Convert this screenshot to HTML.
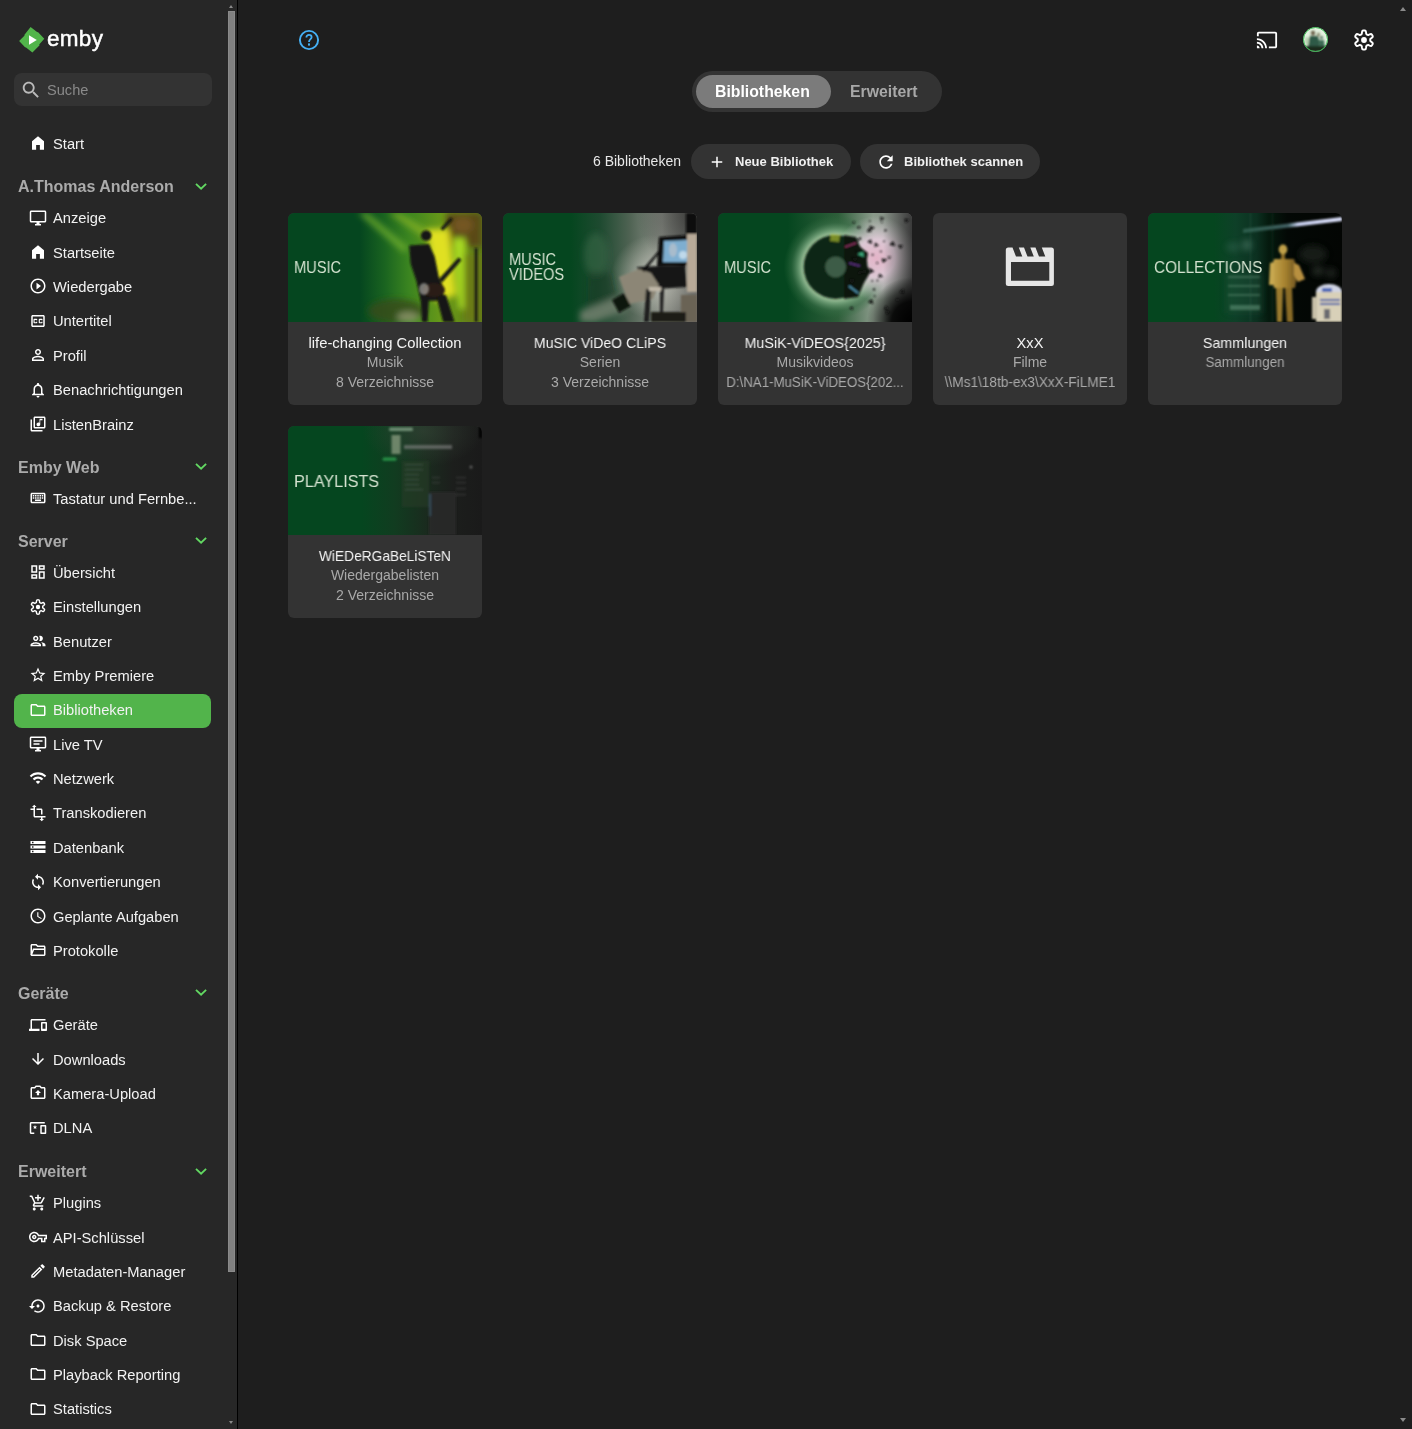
<!DOCTYPE html>
<html><head><meta charset="utf-8"><title>Emby</title><style>
*{box-sizing:border-box;margin:0;padding:0}
.it,.hdr,.t,.lbl,.btn span,.tx{will-change:transform}
html,body{width:1412px;height:1429px;overflow:hidden;background:#1e1e1e;font-family:"Liberation Sans",sans-serif;color:#fff}
.ic{position:absolute;display:block}
#side{position:absolute;left:0;top:0;width:237px;height:1429px;background:#272727;overflow:hidden}
#sbline{position:absolute;left:237px;top:0;width:1px;height:1429px;background:#000}
.hdr{position:absolute;left:18px;font-size:16px;font-weight:700;color:#ababab;line-height:1;white-space:nowrap}
.it{position:absolute;left:52.5px;font-size:14.7px;color:#f2f2f2;line-height:1;white-space:nowrap}
.act{position:absolute;left:14px;width:197px;height:34px;border-radius:8px;background:#52b44b}
.chev{position:absolute;left:193.5px;width:14px;height:12px}
#search{position:absolute;left:14px;top:73px;width:198px;height:33px;border-radius:8px;background:#333}
#search span{will-change:transform;position:absolute;left:33px;top:10px;font-size:14.6px;color:#8a8a8a;line-height:1}
#thumb{position:absolute;left:228px;top:11px;width:7px;height:1261px;background:#808080;border:1px solid #8a8a8a}
.arr{position:absolute;left:228.6px;width:0;height:0;border-left:2.8px solid transparent;border-right:2.8px solid transparent}
.card{position:absolute;width:194px;height:192px;border-radius:6px;background:#333;overflow:hidden}
.card .img{position:absolute;left:0;top:0;width:194px;height:109px;overflow:hidden}
.card .t{position:absolute;left:0;width:194px;text-align:center;white-space:nowrap;line-height:1}
.card .t1{font-size:14.6px;color:#f4f4f4}
.card .t2{font-size:14px;color:#a9a9a9}
.lbl{position:absolute;left:7px;font-size:16.5px;color:#d5e3d0;line-height:1;white-space:nowrap;transform-origin:0 0}
.btn{position:absolute;top:144px;height:35px;border-radius:18px;background:#333}
.btn span{position:absolute;font-size:13px;font-weight:700;color:#f0f0f0;line-height:1;white-space:nowrap}
</style></head>
<body>
<div id="side">
  <svg style="position:absolute;left:0;top:0;width:60px;height:60px" viewBox="0 0 60 60"><polygon points="30.6,27.1 37.4,32.2 37.9,32.0 44.3,38.7 39.2,44.6 39.6,45.3 32.4,52.6 25.7,47.3 25.3,47.6 19.1,41 24.6,35.4 24.3,34.9" fill="#52b54b"/><polygon points="29,35.3 36.8,40 29,44.8" fill="#fff"/></svg>
  <div class="tx" style="position:absolute;left:46.5px;top:27.5px;font-size:22.5px;font-weight:400;color:#fff;line-height:1;letter-spacing:0.3px;-webkit-text-stroke:0.45px #fff">emby</div>
  <div id="search"><svg class="ic" style="left:6px;top:6px;width:22px;height:22px;color:#bbb" viewBox="0 0 24 24" fill="currentColor"><path d="M15.5 14h-.79l-.28-.27C15.41 12.59 16 11.11 16 9.5 16 5.910 13.09 3 9.5 3S3 5.91 3 9.5 5.91 16 9.5 16c1.61 0 3.09-.59 4.23-1.57l.27.28v.79l5 4.99L20.49 19l-4.99-5zm-6 0C7.01 14 5 11.99 5 9.5S7.01 5 9.5 5 14 7.01 14 9.5 11.99 14 9.5 14z"/></svg><span>Suche</span></div>
  <div class="it" style="top:136.86px">Start</div>
<svg class="ic" style="left:28.6px;top:134.2px;width:18px;height:18px;color:#fff" viewBox="0 0 24 24" fill="currentColor"><path d="M4 21V9.5L12 3l8 6.5V21h-5.5v-6.5h-5V21z"/></svg>
<div class="hdr" style="top:179.46px">A.Thomas Anderson</div>
<svg class="chev" style="top:179.70px" viewBox="0 0 14 12"><polyline points="2,3.9 7.05,8.6 12.1,3.9" fill="none" stroke="#62d862" stroke-width="1.9"/></svg>
<div class="it" style="top:211.36px">Anzeige</div>
<svg class="ic" style="left:28.6px;top:208.7px;width:18px;height:18px;color:#fff" viewBox="0 0 24 24" fill="currentColor"><path d="M21 2H3c-1.1 0-2 .9-2 2v12c0 1.1.9 2 2 2h7v2H8v2h8v-2h-2v-2h7c1.1 0 2-.9 2-2V4c0-1.1-.9-2-2-2zm0 14H3V4h18v12z"/></svg>
<div class="it" style="top:245.72px">Startseite</div>
<svg class="ic" style="left:28.6px;top:243.06px;width:18px;height:18px;color:#fff" viewBox="0 0 24 24" fill="currentColor"><path d="M4 21V9.5L12 3l8 6.5V21h-5.5v-6.5h-5V21z"/></svg>
<div class="it" style="top:280.08px">Wiedergabe</div>
<svg class="ic" style="left:28.6px;top:277.42px;width:18px;height:18px;color:#fff" viewBox="0 0 24 24" fill="currentColor"><path d="M10 16.5l6-4.5-6-4.5v9zM12 2C6.48 2 2 6.48 2 12s4.48 10 10 10 10-4.48 10-10S17.52 2 12 2zm0 18c-4.41 0-8-3.59-8-8s3.59-8 8-8 8 3.59 8 8-3.59 8-8 8z"/></svg>
<div class="it" style="top:314.44px">Untertitel</div>
<svg class="ic" style="left:28.6px;top:311.78px;width:18px;height:18px;color:#fff" viewBox="0 0 24 24" fill="currentColor"><path d="M19 4H5c-1.11 0-2 .9-2 2v12c0 1.1.89 2 2 2h14c1.1 0 2-.9 2-2V6c0-1.1-.9-2-2-2zm0 14H5V6h14v12zM7 15h3c.55 0 1-.45 1-1v-1H9.5v.5h-2v-3h2v.5H11v-1c0-.55-.45-1-1-1H7c-.55 0-1 .45-1 1v4c0 .55.45 1 1 1zm7 0h3c.55 0 1-.45 1-1v-1h-1.5v.5h-2v-3h2v.5H18v-1c0-.55-.45-1-1-1h-3c-.55 0-1 .45-1 1v4c0 .55.45 1 1 1z"/></svg>
<div class="it" style="top:348.80px">Profil</div>
<svg class="ic" style="left:28.6px;top:346.14px;width:18px;height:18px;color:#fff" viewBox="0 0 24 24" fill="currentColor"><path d="M12 5.9c1.16 0 2.1.94 2.1 2.1s-.94 2.1-2.1 2.1S9.9 9.16 9.9 8s.94-2.1 2.1-2.1m0 9c2.97 0 6.1 1.46 6.1 2.1v1.1H5.9V17c0-.64 3.13-2.1 6.1-2.1M12 4C9.79 4 8 5.79 8 8s1.79 4 4 4 4-1.79 4-4-1.79-4-4-4zm0 9c-2.67 0-8 1.34-8 4v3h16v-3c0-2.66-5.33-4-8-4z"/></svg>
<div class="it" style="top:383.16px">Benachrichtigungen</div>
<svg class="ic" style="left:28.6px;top:380.5px;width:18px;height:18px;color:#fff" viewBox="0 0 24 24" fill="currentColor"><path d="M12 22c1.1 0 2-.9 2-2h-4c0 1.1.89 2 2 2zm6-6v-5c0-3.07-1.64-5.64-4.5-6.32V4c0-.83-.67-1.5-1.5-1.5s-1.5.67-1.5 1.5v.68C7.63 5.36 6 7.92 6 11v5l-2 2v1h16v-1l-2-2zm-2 1H8v-6c0-2.48 1.51-4.5 4-4.5s4 2.02 4 4.5v6z"/></svg>
<div class="it" style="top:417.52px">ListenBrainz</div>
<svg class="ic" style="left:28.6px;top:414.86px;width:18px;height:18px;color:#fff" viewBox="0 0 24 24" fill="currentColor"><path d="M20 2H8c-1.1 0-2 .9-2 2v12c0 1.1.9 2 2 2h12c1.1 0 2-.9 2-2V4c0-1.1-.9-2-2-2zm0 14H8V4h12v12zm-7.5-1c1.38 0 2.5-1.12 2.5-2.5V7h3V5h-4v5.51c-.42-.32-.93-.51-1.5-.51-1.38 0-2.5 1.12-2.5 2.5s1.12 2.5 2.5 2.5zM4 6H2v14c0 1.1.9 2 2 2h14v-2H4V6z"/></svg>
<div class="hdr" style="top:459.96px">Emby Web</div>
<svg class="chev" style="top:460.20px" viewBox="0 0 14 12"><polyline points="2,3.9 7.05,8.6 12.1,3.9" fill="none" stroke="#62d862" stroke-width="1.9"/></svg>
<div class="it" style="top:492.06px">Tastatur und Fernbe...</div>
<svg class="ic" style="left:28.6px;top:489.4px;width:18px;height:18px;color:#fff" viewBox="0 0 24 24" fill="currentColor"><path d="M20 7v10H4V7h16m0-2H4c-1.1 0-1.99.9-1.99 2L2 17c0 1.1.9 2 2 2h16c1.1 0 2-.9 2-2V7c0-1.1-.9-2-2-2zm-9 3h2v2h-2zm0 3h2v2h-2zM8 8h2v2H8zm0 3h2v2H8zm-3 0h2v2H5zm0-3h2v2H5zm3 6h8v2H8zm6-3h2v2h-2zm0-3h2v2h-2zm3 3h2v2h-2zm0-3h2v2h-2z"/></svg>
<div class="hdr" style="top:533.86px">Server</div>
<svg class="chev" style="top:534.10px" viewBox="0 0 14 12"><polyline points="2,3.9 7.05,8.6 12.1,3.9" fill="none" stroke="#62d862" stroke-width="1.9"/></svg>
<div class="it" style="top:565.96px">Übersicht</div>
<svg class="ic" style="left:28.6px;top:563.3px;width:18px;height:18px;color:#fff" viewBox="0 0 24 24" fill="currentColor"><path d="M19 5v2h-4V5h4M9 5v6H5V5h4m10 8v6h-4v-6h4M9 17v2H5v-2h4M21 3h-8v6h8V3zM11 3H3v10h8V3zm10 8h-8v10h8V11zm-10 4H3v6h8v-6z"/></svg>
<div class="it" style="top:600.32px">Einstellungen</div>
<svg class="ic" style="left:28.6px;top:597.66px;width:18px;height:18px;color:#fff" viewBox="0 0 24 24" fill="currentColor"><polygon fill="none" stroke="currentColor" stroke-width="1.9" stroke-linejoin="round" points="12.00,2.42 12.83,2.48 13.62,2.80 14.04,4.37 14.21,5.93 14.64,6.34 15.11,6.61 15.58,6.89 16.15,7.05 17.59,6.41 19.16,6.00 19.83,6.52 20.29,7.21 20.66,7.96 20.78,8.80 19.63,9.96 18.36,10.88 18.22,11.46 18.22,12.00 18.22,12.54 18.36,13.12 19.63,14.04 20.78,15.20 20.66,16.04 20.29,16.79 19.83,17.48 19.16,18.00 17.59,17.59 16.15,16.95 15.58,17.11 15.11,17.39 14.64,17.66 14.21,18.07 14.04,19.63 13.62,21.20 12.83,21.52 12.00,21.58 11.17,21.52 10.38,21.20 9.96,19.63 9.79,18.07 9.36,17.66 8.89,17.39 8.42,17.11 7.85,16.95 6.41,17.59 4.84,18.00 4.17,17.48 3.71,16.79 3.34,16.04 3.22,15.20 4.37,14.04 5.64,13.12 5.78,12.54 5.78,12.00 5.78,11.46 5.64,10.88 4.37,9.96 3.22,8.80 3.34,7.96 3.71,7.21 4.17,6.52 4.84,6.00 6.41,6.41 7.85,7.05 8.42,6.89 8.89,6.61 9.36,6.34 9.79,5.93 9.96,4.37 10.38,2.80 11.17,2.48 12.00,2.42"/><circle cx="12" cy="12" r="2.9"/></svg>
<div class="it" style="top:634.68px">Benutzer</div>
<svg class="ic" style="left:28.6px;top:632.02px;width:18px;height:18px;color:#fff" viewBox="0 0 24 24" fill="currentColor"><path d="M9 13.75c-2.34 0-7 1.17-7 3.5V19h14v-1.75c0-2.33-4.66-3.5-7-3.5zM4.34 17c.84-.58 2.870-1.25 4.66-1.25s3.82.67 4.66 1.25H4.34zM9 12c1.93 0 3.5-1.57 3.5-3.5S10.93 5 9 5 5.5 6.57 5.5 8.5 7.07 12 9 12zm0-5c.83 0 1.5.67 1.5 1.5S9.83 10 9 10s-1.5-.67-1.5-1.5S8.17 7 9 7zm7.04 6.81c1.16.84 1.96 1.96 1.96 3.44V19h4v-1.75c0-2.02-3.5-3.17-5.96-3.44zM15 12c1.93 0 3.5-1.57 3.5-3.5S16.93 5 15 5c-.54 0-1.04.13-1.5.35.63.89 1 1.98 1 3.15s-.37 2.26-1 3.15c.46.22.96.35 1.5.35z"/></svg>
<div class="it" style="top:669.04px">Emby Premiere</div>
<svg class="ic" style="left:28.6px;top:666.38px;width:18px;height:18px;color:#fff" viewBox="0 0 24 24" fill="currentColor"><path d="M22 9.24l-7.19-.62L12 2 9.19 8.63 2 9.24l5.46 4.73L5.82 21 12 17.27 18.18 21l-1.63-7.03L22 9.24zM12 15.4l-3.76 2.27 1-4.28-3.32-2.88 4.38-.38L12 6.1l1.71 4.04 4.38.38-3.32 2.88 1 4.28L12 15.4z"/></svg>
<div class="act" style="top:693.84px"></div>
<div class="it" style="top:703.40px">Bibliotheken</div>
<svg class="ic" style="left:28.6px;top:700.74px;width:18px;height:18px;color:#fff" viewBox="0 0 24 24" fill="currentColor"><path d="M9.17 6l2 2H20v10H4V6h5.17M10 4H4c-1.1 0-1.99.9-1.99 2L2 18c0 1.1.9 2 2 2h16c1.1 0 2-.9 2-2V8c0-1.1-.9-2-2-2h-8l-2-2z"/></svg>
<div class="it" style="top:737.76px">Live TV</div>
<svg class="ic" style="left:28.6px;top:735.1px;width:18px;height:18px;color:#fff" viewBox="0 0 24 24" fill="currentColor"><path d="M21 2H3c-1.1 0-2 .9-2 2v12c0 1.1.9 2 2 2h7v2H8v2h8v-2h-2v-2h7c1.1 0 2-.9 2-2V4c0-1.1-.9-2-2-2zm0 14H3V4h18v12zM6 7h12v2H6zm0 4h8v2H6z"/></svg>
<div class="it" style="top:772.12px">Netzwerk</div>
<svg class="ic" style="left:28.6px;top:769.46px;width:18px;height:18px;color:#fff" viewBox="0 0 24 24" fill="currentColor"><path d="M1 9l2 2c4.97-4.97 13.03-4.97 18 0l2-2C16.93 2.93 7.08 2.93 1 9zm8 8l3 3 3-3c-1.65-1.66-4.34-1.66-6 0zm-4-4l2 2c2.76-2.76 7.24-2.76 10 0l2-2C15.14 9.14 8.87 9.14 5 13z"/></svg>
<div class="it" style="top:806.48px">Transkodieren</div>
<svg class="ic" style="left:28.6px;top:803.82px;width:18px;height:18px;color:#fff" viewBox="0 0 24 24" fill="currentColor"><path d="M22 18v-2H8V4h2L7 1 4 4h2v2H2v2h4v8c0 1.1.9 2 2 2h8v2h-2l3 3 3-3h-2v-2h4zM10 8h6v6h2V8c0-1.1-.9-2-2-2h-6v2z"/></svg>
<div class="it" style="top:840.84px">Datenbank</div>
<svg class="ic" style="left:28.6px;top:838.18px;width:18px;height:18px;color:#fff" viewBox="0 0 24 24" fill="currentColor"><path d="M2 20h20v-4H2v4zm2-3h2v2H4v-2zM2 4v4h20V4H2zm4 3H4V5h2v2zm-4 7h20v-4H2v4zm2-3h2v2H4v-2z"/></svg>
<div class="it" style="top:875.20px">Konvertierungen</div>
<svg class="ic" style="left:28.6px;top:872.54px;width:18px;height:18px;color:#fff" viewBox="0 0 24 24" fill="currentColor"><path d="M12 4V1L8 5l4 4V6c3.31 0 6 2.69 6 6 0 1.01-.25 1.97-.7 2.8l1.46 1.46C19.54 15.03 20 13.57 20 12c0-4.42-3.58-8-8-8zm0 14c-3.31 0-6-2.69-6-6 0-1.01.25-1.97.7-2.8L5.24 7.74C4.46 8.97 4 10.430 4 12c0 4.42 3.58 8 8 8v3l4-4-4-4v3z"/></svg>
<div class="it" style="top:909.56px">Geplante Aufgaben</div>
<svg class="ic" style="left:28.6px;top:906.9px;width:18px;height:18px;color:#fff" viewBox="0 0 24 24" fill="currentColor"><path d="M11.99 2C6.47 2 2 6.48 2 12s4.47 10 9.99 10C17.52 22 22 17.52 22 12S17.52 2 11.99 2zM12 20c-4.42 0-8-3.58-8-8s3.58-8 8-8 8 3.58 8 8-3.58 8-8 8zm.5-13H11v6l5.25 3.15.75-1.23-4.5-2.67z"/></svg>
<div class="it" style="top:943.92px">Protokolle</div>
<svg class="ic" style="left:28.6px;top:941.26px;width:18px;height:18px;color:#fff" viewBox="0 0 24 24" fill="currentColor"><path d="M20 6h-8l-2-2H4c-1.1 0-1.99.9-1.99 2L2 18c0 1.1.9 2 2 2h16c1.1 0 2-.9 2-2V8c0-1.1-.9-2-2-2zm0 12H4V6h5.17l2 2H20v10z"/><path d="M3 19L6 11H21" fill="none" stroke="currentColor" stroke-width="2"/></svg>
<div class="hdr" style="top:985.86px">Geräte</div>
<svg class="chev" style="top:986.10px" viewBox="0 0 14 12"><polyline points="2,3.9 7.05,8.6 12.1,3.9" fill="none" stroke="#62d862" stroke-width="1.9"/></svg>
<div class="it" style="top:1018.16px">Geräte</div>
<svg class="ic" style="left:28.6px;top:1015.5px;width:18px;height:18px;color:#fff" viewBox="0 0 24 24" fill="currentColor"><path d="M4 6h18V4H4c-1.1 0-2 .9-2 2v11H0v3h14v-3H4V6zm19 2h-6c-.55 0-1 .45-1 1v10c0 .55.45 1 1 1h6c.55 0 1-.45 1-1V9c0-.55-.45-1-1-1zm-1 9h-4v-7h4v7z"/></svg>
<div class="it" style="top:1052.52px">Downloads</div>
<svg class="ic" style="left:28.6px;top:1049.86px;width:18px;height:18px;color:#fff" viewBox="0 0 24 24" fill="currentColor"><path d="M20 12l-1.41-1.41L13 16.17V4h-2v12.17l-5.58-5.59L4 12l8 8 8-8z"/></svg>
<div class="it" style="top:1086.88px">Kamera-Upload</div>
<svg class="ic" style="left:28.6px;top:1084.22px;width:18px;height:18px;color:#fff" viewBox="0 0 24 24" fill="currentColor"><path d="M20 4h-3.17L15 2H9L7.17 4H4c-1.1 0-2 .9-2 2v12c0 1.1.9 2 2 2h16c1.1 0 2-.9 2-2V6c0-1.1-.9-2-2-2zm0 14H4V6h4.05l1.830-2h4.24l1.83 2H20v12zM12 8l-4 4h2.5v3h3v-3H16z"/></svg>
<div class="it" style="top:1121.24px">DLNA</div>
<svg class="ic" style="left:28.6px;top:1118.58px;width:18px;height:18px;color:#fff" viewBox="0 0 24 24" fill="currentColor"><path d="M3 6h18V4H3c-1.1 0-2 .9-2 2v12c0 1.1.9 2 2 2h4v-2H3V6zM22 8h-6c-.5 0-1 .5-1 1v10c0 .5.5 1 1 1h6c.5 0 1-.5 1-1V9c0-.5-.5-1-1-1zm-1 10h-4v-8h4v8zM8 8l.8 1.9 2 .2-1.5 1.3.5 2-1.8-1.1-1.8 1.1.5-2L5.2 10.1l2-.2z"/></svg>
<div class="hdr" style="top:1164.26px">Erweitert</div>
<svg class="chev" style="top:1164.50px" viewBox="0 0 14 12"><polyline points="2,3.9 7.05,8.6 12.1,3.9" fill="none" stroke="#62d862" stroke-width="1.9"/></svg>
<div class="it" style="top:1196.16px">Plugins</div>
<svg class="ic" style="left:28.6px;top:1193.5px;width:18px;height:18px;color:#fff" viewBox="0 0 24 24" fill="currentColor"><path d="M11 9h2V6h3V4h-3V1h-2v3H8v2h3v3zm-4 9c-1.1 0-1.99.9-1.99 2S5.9 22 7 22s2-.9 2-2-.9-2-2-2zm10 0c-1.1 0-1.99.9-1.99 2s.89 2 1.99 2 2-.9 2-2-.9-2-2-2zm-9.83-3.25l.03-.12.9-1.63h7.45c.75 0 1.41-.41 1.750-1.03l3.86-7.01L19.42 4h-.01l-1.1 2-2.76 5H8.53l-.13-.27L6.16 6l-.95-2-.94-2H1v2h2l3.6 7.59-1.35 2.45c-.16.28-.25.61-.25.96 0 1.1.9 2 2 2h12v-2H7.42c-.13 0-.25-.11-.25-.25z"/></svg>
<div class="it" style="top:1230.52px">API-Schlüssel</div>
<svg class="ic" style="left:28.6px;top:1227.86px;width:18px;height:18px;color:#fff" viewBox="0 0 24 24" fill="currentColor"><path d="M22 19h-6v-4h-2.68c-1.14 2.42-3.6 4-6.32 4-3.86 0-7-3.14-7-7s3.14-7 7-7c2.72 0 5.17 1.58 6.32 4H24v6h-2v4zm-4-2h2v-4h2v-2H11.94l-.23-.67C11.01 8.34 9.11 7 7 7c-2.76 0-5 2.24-5 5s2.24 5 5 5c2.11 0 4.01-1.34 4.71-3.33l.23-.67H18v4zM7 15c-1.65 0-3-1.35-3-3s1.35-3 3-3 3 1.35 3 3-1.35 3-3 3zm0-4c-.55 0-1 .45-1 1s.45 1 1 1 1-.45 1-1-.45-1-1-1z"/></svg>
<div class="it" style="top:1264.88px">Metadaten-Manager</div>
<svg class="ic" style="left:28.6px;top:1262.22px;width:18px;height:18px;color:#fff" viewBox="0 0 24 24" fill="currentColor"><path d="M3 17.25V21h3.75L17.81 9.94l-3.75-3.75L3 17.25zM5.92 19H5v-.92l9.06-9.06.92.92L5.92 19zM20.71 5.63l-2.34-2.34c-.2-.2-.45-.29-.71-.29s-.51.1-.7.29l-1.83 1.83 3.75 3.75 1.83-1.83c.39-.39.39-1.02 0-1.41z"/></svg>
<div class="it" style="top:1299.24px">Backup &amp; Restore</div>
<svg class="ic" style="left:28.6px;top:1296.58px;width:18px;height:18px;color:#fff" viewBox="0 0 24 24" fill="currentColor"><path d="M14 12c0-1.1-.9-2-2-2s-2 .9-2 2 .9 2 2 2 2-.9 2-2zm-2-9c-4.97 0-9 4.03-9 9H0l4 4 4-4H5c0-3.87 3.13-7 7-7s7 3.13 7 7-3.13 7-7 7c-1.51 0-2.91-.49-4.06-1.3l-1.42 1.44C8.04 20.3 9.94 21 12 21c4.97 0 9-4.03 9-9s-4.03-9-9-9z"/></svg>
<div class="it" style="top:1333.60px">Disk Space</div>
<svg class="ic" style="left:28.6px;top:1330.94px;width:18px;height:18px;color:#fff" viewBox="0 0 24 24" fill="currentColor"><path d="M9.17 6l2 2H20v10H4V6h5.17M10 4H4c-1.1 0-1.99.9-1.99 2L2 18c0 1.1.9 2 2 2h16c1.1 0 2-.9 2-2V8c0-1.1-.9-2-2-2h-8l-2-2z"/></svg>
<div class="it" style="top:1367.96px">Playback Reporting</div>
<svg class="ic" style="left:28.6px;top:1365.3px;width:18px;height:18px;color:#fff" viewBox="0 0 24 24" fill="currentColor"><path d="M9.17 6l2 2H20v10H4V6h5.17M10 4H4c-1.1 0-1.99.9-1.99 2L2 18c0 1.1.9 2 2 2h16c1.1 0 2-.9 2-2V8c0-1.1-.9-2-2-2h-8l-2-2z"/></svg>
<div class="it" style="top:1402.32px">Statistics</div>
<svg class="ic" style="left:28.6px;top:1399.66px;width:18px;height:18px;color:#fff" viewBox="0 0 24 24" fill="currentColor"><path d="M9.17 6l2 2H20v10H4V6h5.17M10 4H4c-1.1 0-1.99.9-1.99 2L2 18c0 1.1.9 2 2 2h16c1.1 0 2-.9 2-2V8c0-1.1-.9-2-2-2h-8l-2-2z"/></svg>
  <div id="thumb"></div>
  <div class="arr" style="top:4.8px;border-bottom:3.3px solid #8a8a8a"></div>
  <div class="arr" style="top:1420.8px;border-top:3.3px solid #8a8a8a"></div>
</div>
<div id="sbline"></div>
<div id="main">
  <svg class="ic" style="left:297.3px;top:28px;width:24px;height:24px;color:#45b0f5" viewBox="0 0 24 24" fill="currentColor"><circle cx="12" cy="12" r="9.1" fill="none" stroke="currentColor" stroke-width="1.9"/><path d="M9.4 9.4C9.4 7.9 10.5 6.9 12 6.9S14.6 7.9 14.6 9.2C14.6 11 12 11.3 12 13.9" fill="none" stroke="currentColor" stroke-width="1.8"/><rect x="11" y="15.4" width="2" height="2.2"/></svg>
  <svg class="ic" style="left:1255.9px;top:29.05px;width:22px;height:22px;color:#fff" viewBox="0 0 24 24" fill="currentColor"><path d="M21 3H3c-1.1 0-2 .9-2 2v3h2V5h18v14h-7v2h7c1.1 0 2-.9 2-2V5c0-1.1-.9-2-2-2zM1 18v3h3c0-1.66-1.34-3-3-3zm0-4v2c2.76 0 5 2.24 5 5h2c0-3.87-3.13-7-7-7zm0-4v2c4.970 0 9 4.03 9 9h2c0-6.08-4.93-11-11-11z"/></svg>
  <svg style="position:absolute;left:1303px;top:27px;width:25px;height:25px" viewBox="0 0 25 25"><defs><clipPath id="avc"><circle cx="12.5" cy="12.5" r="12.2"/></clipPath><filter id="avb"><feGaussianBlur stdDeviation="1.1"/></filter></defs><g clip-path="url(#avc)"><rect width="25" height="25" fill="#e4f2e0"/><g filter="url(#avb)"><ellipse cx="10" cy="6" rx="2.2" ry="2.5" fill="#6a6048"/><ellipse cx="15.5" cy="7.5" rx="1.6" ry="2" fill="#8a8a70"/><polygon points="7,9 15,9 17,18 14,25 6,25 5,16" fill="#2f5a46"/><ellipse cx="18.5" cy="10.5" rx="1.4" ry="1.6" fill="#3a5a48"/><polygon points="16,13 21,13 22,22 17,24" fill="#3a6a52"/><rect x="0" y="19" width="25" height="6" fill="#1a2a1c"/><ellipse cx="4" cy="14" rx="2" ry="4" fill="#b8d0b0"/></g></g><circle cx="12.5" cy="12.5" r="12" fill="none" stroke="#3dbb55" stroke-width="1"/></svg>
  <svg class="ic" style="left:1352px;top:27.6px;width:24px;height:24px;color:#fff" viewBox="0 0 24 24" fill="currentColor"><polygon fill="none" stroke="currentColor" stroke-width="1.9" stroke-linejoin="round" points="12.00,2.42 12.83,2.48 13.62,2.80 14.04,4.37 14.21,5.93 14.64,6.34 15.11,6.61 15.58,6.89 16.15,7.05 17.59,6.41 19.16,6.00 19.83,6.52 20.29,7.21 20.66,7.96 20.78,8.80 19.63,9.96 18.36,10.88 18.22,11.46 18.22,12.00 18.22,12.54 18.36,13.12 19.63,14.04 20.78,15.20 20.66,16.04 20.29,16.79 19.83,17.48 19.16,18.00 17.59,17.59 16.15,16.95 15.58,17.11 15.11,17.39 14.64,17.66 14.21,18.07 14.04,19.63 13.62,21.20 12.83,21.52 12.00,21.58 11.17,21.52 10.38,21.20 9.96,19.63 9.79,18.07 9.36,17.66 8.89,17.39 8.42,17.11 7.85,16.95 6.41,17.59 4.84,18.00 4.17,17.48 3.71,16.79 3.34,16.04 3.22,15.20 4.37,14.04 5.64,13.12 5.78,12.54 5.78,12.00 5.78,11.46 5.64,10.88 4.37,9.96 3.22,8.80 3.34,7.96 3.71,7.21 4.17,6.52 4.84,6.00 6.41,6.41 7.85,7.05 8.42,6.89 8.89,6.61 9.36,6.34 9.79,5.93 9.96,4.37 10.38,2.80 11.17,2.48 12.00,2.42"/><circle cx="12" cy="12" r="2.9"/></svg>
  <div style="position:absolute;left:692px;top:71px;width:250px;height:41px;border-radius:21px;background:#333"></div>
  <div style="position:absolute;left:696px;top:75px;width:135px;height:33px;border-radius:17px;background:#7b7b7b"></div>
  <div class="tx" style="position:absolute;left:714.5px;top:83.63px;font-size:15.8px;font-weight:700;color:#fff;line-height:1">Bibliotheken</div>
  <div class="tx" style="position:absolute;left:849.5px;top:83.63px;font-size:15.8px;font-weight:700;color:#a8a8a8;line-height:1">Erweitert</div>
  <div class="tx" style="position:absolute;left:593px;top:154.15px;font-size:14px;color:#e8e8e8;line-height:1">6 Bibliotheken</div>
  <div class="btn" style="left:691px;width:160px"><span style="left:43.5px;top:11.00px">Neue Bibliothek</span></div>
  <div class="btn" style="left:860px;width:180px"><span style="left:43.5px;top:11.00px">Bibliothek scannen</span></div>
  <svg class="ic" style="left:708px;top:153px;width:18px;height:18px;color:#fff" viewBox="0 0 24 24" fill="currentColor"><path d="M19 13h-6v6h-2v-6H5v-2h6V5h2v6h6v2z"/></svg>
  <svg class="ic" style="left:876px;top:152px;width:20px;height:20px;color:#fff" viewBox="0 0 24 24" fill="currentColor"><path d="M17.65 6.35C16.2 4.9 14.21 4 12 4c-4.42 0-7.99 3.58-7.99 8s3.57 8 7.99 8c3.73 0 6.84-2.55 7.73-6h-2.08c-.82 2.33-3.04 4-5.650 4-3.31 0-6-2.69-6-6s2.69-6 6-6c1.66 0 3.14.69 4.22 1.78L13 11h7V4l-2.35 2.35z"/></svg>
  <div class="card" style="left:288px;top:213px"><div class="img"><svg width="194" height="109" viewBox="0 0 194 109" style="position:absolute;left:0;top:0;display:block"><defs><linearGradient id="c1g" x1="0" y1="0" x2="1" y2="0"><stop offset="0" stop-color="#05461f"/><stop offset="0.37" stop-color="#05461f"/><stop offset="0.5" stop-color="#1a6420"/><stop offset="0.62" stop-color="#3a8420"/><stop offset="0.8" stop-color="#6a9a18"/><stop offset="1" stop-color="#5a7a18"/></linearGradient><filter id="b1" x="-20%" y="-20%" width="140%" height="140%"><feGaussianBlur stdDeviation="1.2"/></filter><filter id="b2" x="-50%" y="-50%" width="200%" height="200%"><feGaussianBlur stdDeviation="3"/></filter><filter id="b4" x="-50%" y="-50%" width="200%" height="200%"><feGaussianBlur stdDeviation="6"/></filter></defs><rect width="194" height="109" fill="url(#c1g)"/>
<g filter="url(#b2)">
<polygon points="70,0 80,0 120,34 116,40" fill="#7ab830" opacity="0.7"/>
<polygon points="100,0 112,0 160,30 150,34" fill="#9ac028" opacity="0.6"/>
<rect x="158" y="0" width="36" height="34" fill="#5a4a18"/>
<polygon points="139,16 161,16 168,82 147,89" fill="#e0e020"/>
<polygon points="165,25 177,25 182,96 171,96" fill="#a8dc20"/>
<rect x="176" y="40" width="18" height="69" fill="#6a7a18"/>
<ellipse cx="108" cy="98" rx="28" ry="12" fill="#3a4a18" opacity="0.8"/>
<ellipse cx="120" cy="104" rx="11" ry="5" fill="#b0b090" opacity="0.6"/>
<ellipse cx="175" cy="12" rx="10" ry="8" fill="#7a5a28" opacity="0.8"/>
</g>
<g filter="url(#b1)" fill="#141612">
<circle cx="138.2" cy="22.5" r="5.3"/>
<polygon points="121.2,32.4 141,31 146.7,43.7 151,65 156.6,76.3 153.8,87.7 132.6,87.7 128.3,67.8 122.6,50.8"/>
<polygon points="132.6,84.8 141,84.8 139.6,109 134,109"/>
<polygon points="148,82 158,82 166.6,109 155.2,109"/>
<polygon points="151,66 170.5,44.5 173.5,47 154,69.5"/>
<ellipse cx="146" cy="77" rx="11" ry="7" fill="#2a1c12"/>
<polygon points="162.5,4.5 165,6.5 155,17.5 152.5,15.5"/>
<rect x="186.8" y="35" width="2.6" height="74"/>
</g>
<ellipse cx="136" cy="76" rx="5" ry="6" fill="#c8c8c0" opacity="0.55" filter="url(#b1)"/>
</svg><div class="lbl" style="top:46.3px;left:6px;transform:scaleX(0.885)">MUSIC</div></div><div class="t t1" style="top:122.64px;transform:scaleX(1.014)">life-changing Collection</div><div class="t t2" style="top:142.15px">Musik</div><div class="t t2" style="top:162.15px">8 Verzeichnisse</div></div>
<div class="card" style="left:503px;top:213px"><div class="img"><svg width="194" height="109" viewBox="0 0 194 109" style="position:absolute;left:0;top:0;display:block"><defs><linearGradient id="c2g" x1="0" y1="0" x2="1" y2="0"><stop offset="0" stop-color="#05461f"/><stop offset="0.35" stop-color="#05461f"/><stop offset="0.5" stop-color="#1e4a30"/><stop offset="0.65" stop-color="#4e6252"/><stop offset="0.82" stop-color="#8c9088"/><stop offset="1" stop-color="#6a6a66"/></linearGradient>
<radialGradient id="c2r" cx="150" cy="64" r="42" gradientUnits="userSpaceOnUse"><stop offset="0" stop-color="#d0d0c8" stop-opacity="0.85"/><stop offset="1" stop-color="#c8c8bc" stop-opacity="0"/></radialGradient>
<radialGradient id="c2d" cx="194" cy="0" r="60" gradientUnits="userSpaceOnUse"><stop offset="0" stop-color="#202020" stop-opacity="0.7"/><stop offset="1" stop-color="#202020" stop-opacity="0"/></radialGradient><filter id="b1" x="-20%" y="-20%" width="140%" height="140%"><feGaussianBlur stdDeviation="1.2"/></filter><filter id="b2" x="-50%" y="-50%" width="200%" height="200%"><feGaussianBlur stdDeviation="3"/></filter><filter id="b4" x="-50%" y="-50%" width="200%" height="200%"><feGaussianBlur stdDeviation="6"/></filter></defs><rect width="194" height="109" fill="url(#c2g)"/>
<rect width="194" height="109" fill="url(#c2r)"/>
<rect width="194" height="109" fill="url(#c2d)"/>
<g filter="url(#b2)">
<ellipse cx="93" cy="42" rx="12" ry="22" fill="#3a6a48" opacity="0.55"/>
<polygon points="86,58 108,60 116,100 84,104" fill="#1c3a26" opacity="0.5"/>
<polygon points="77,98 114,84 126,96 92,109 77,109" fill="#6e7e6c" opacity="0.9"/>
</g>
<g filter="url(#b1)">
<polygon points="134,54 182,52 184,74 140,77" fill="#161616"/>
<polygon points="156,24 186,22 186,52 154,53" fill="#0e0e0e"/>
<polygon points="161,28 184,27 184,49 160,49" fill="#7eaed0"/>
<ellipse cx="170" cy="37" rx="4" ry="7" fill="#a8bccc"/>
<ellipse cx="180" cy="42" rx="4" ry="4" fill="#d0e4f0" opacity="0.8"/>
<polygon points="116,64 136,56 148,60 156,72 150,86 126,91" fill="#8c8676"/>
<polygon points="109,87 121,80 128,93 116,100" fill="#0e140e"/>
<polygon points="139,57 157,36 158.5,37 141,59" fill="#101010"/>
<polygon points="143,76 148,76 146,109 141,109" fill="#1c1c1c"/>
<polygon points="157,76 161,76 160,100 157,100" fill="#202020"/>
<rect x="146" y="74" width="12" height="4" fill="#c0b8a8"/>
<rect x="183" y="0" width="11" height="22" fill="#0c0c0c"/>
<rect x="184" y="21" width="10" height="58" fill="#b8aa98"/>
<rect x="178" y="82" width="16" height="27" fill="#6a6454"/>
<rect x="148" y="99" width="35" height="10" fill="#1a1a16"/>
</g>
</svg><div class="lbl" style="top:38.9px;left:6px;line-height:15.2px;transform:scaleX(0.885)">MUSIC<br>VIDEOS</div></div><div class="t t1" style="top:122.64px;transform:scaleX(0.965)">MuSIC ViDeO CLiPS</div><div class="t t2" style="top:142.15px">Serien</div><div class="t t2" style="top:162.15px">3 Verzeichnisse</div></div>
<div class="card" style="left:718px;top:213px"><div class="img"><svg width="194" height="109" viewBox="0 0 194 109" style="position:absolute;left:0;top:0;display:block"><defs><linearGradient id="c3g" x1="0" y1="0" x2="1" y2="0"><stop offset="0" stop-color="#05461f"/><stop offset="0.36" stop-color="#05461f"/><stop offset="0.62" stop-color="#2e5e3a"/><stop offset="0.8" stop-color="#8a9a8a"/><stop offset="1" stop-color="#808080"/></linearGradient>
<radialGradient id="c3halo" cx="117.6" cy="53.9" r="52" gradientUnits="userSpaceOnUse"><stop offset="0" stop-color="#b8d8b0"/><stop offset="0.6" stop-color="#b0d0a8"/><stop offset="0.7" stop-color="#7aa880" stop-opacity="0.85"/><stop offset="0.85" stop-color="#3a7048" stop-opacity="0.5"/><stop offset="1" stop-color="#2a6a3a" stop-opacity="0"/></radialGradient>
<radialGradient id="c3pink" cx="158" cy="45" r="42" gradientUnits="userSpaceOnUse"><stop offset="0" stop-color="#e4b4c8"/><stop offset="0.45" stop-color="#dcc8d4"/><stop offset="1" stop-color="#d0d0d0" stop-opacity="0"/></radialGradient>
<linearGradient id="c3edge" x1="0" y1="0" x2="1" y2="0"><stop offset="0" stop-color="#000" stop-opacity="0"/><stop offset="1" stop-color="#000" stop-opacity="0.55"/></linearGradient>
<radialGradient id="c3dark" cx="194" cy="109" r="45" gradientUnits="userSpaceOnUse"><stop offset="0" stop-color="#000"/><stop offset="0.45" stop-color="#000" stop-opacity="0.9"/><stop offset="1" stop-color="#000" stop-opacity="0"/></radialGradient><filter id="b1" x="-20%" y="-20%" width="140%" height="140%"><feGaussianBlur stdDeviation="1.2"/></filter><filter id="b2" x="-50%" y="-50%" width="200%" height="200%"><feGaussianBlur stdDeviation="3"/></filter><filter id="b4" x="-50%" y="-50%" width="200%" height="200%"><feGaussianBlur stdDeviation="6"/></filter></defs><rect width="194" height="109" fill="url(#c3g)"/>
<rect width="194" height="109" fill="url(#c3halo)"/>
<rect width="194" height="109" fill="url(#c3pink)"/>
<rect x="165" y="0" width="29" height="109" fill="url(#c3edge)"/>
<rect width="194" height="109" fill="url(#c3dark)"/>
<g filter="url(#b1)">
<circle cx="117.6" cy="53.9" r="32" fill="#0b2614"/>
<polygon points="126,22 138,24 142,34 150,40 148,52 153,58 146,70 140,84 126,86" fill="#0a1410"/>
<circle cx="117.6" cy="53.9" r="10.5" fill="#3e5c46"/>
<polygon points="113,21 122,22 121,29 112,28" fill="#a8b830" opacity="0.7"/>
<line x1="127" y1="34" x2="138" y2="30" stroke="#c04080" stroke-width="1"/>
<line x1="131" y1="50" x2="142" y2="53" stroke="#8040b0" stroke-width="1"/>
<line x1="131" y1="73" x2="140" y2="80" stroke="#60b0d0" stroke-width="1.3"/>
<polygon points="139,41 145,39 146,44" fill="#40b080"/>
</g>
<g fill="#121212" filter="url(#b1)"><polygon points="153.9,18.7 148.7,19.0 150.6,15.1"/><polygon points="161.2,38.4 163.8,37.4 163.7,39.6"/><polygon points="135.8,45.8 133.0,45.7 134.3,43.7"/><polygon points="157.0,84.6 155.3,82.7 157.7,82.3"/><polygon points="165.8,96.4 168.1,92.6 170.6,95.9"/><polygon points="187.6,10.3 186.5,5.5 191.4,6.8"/><polygon points="141.4,12.8 141.4,15.9 138.6,14.6"/><polygon points="140.1,61.2 141.8,57.0 144.9,60.0"/><polygon points="164.3,10.4 162.5,8.8 164.7,8.2"/><polygon points="169.3,43.5 173.1,43.6 171.4,46.3"/><polygon points="157.0,29.4 161.0,32.6 156.4,34.1"/><polygon points="148.4,57.1 146.7,60.9 144.0,58.1"/><polygon points="177.6,33.1 171.3,31.9 175.0,27.9"/><polygon points="154.2,76.5 156.9,75.1 157.1,77.7"/><polygon points="130.8,66.6 136.5,66.3 134.4,70.5"/><polygon points="179.8,32.0 185.1,32.3 182.6,36.0"/><polygon points="169.4,46.3 165.1,50.1 163.4,45.4"/><polygon points="158.9,66.2 160.8,67.7 158.6,68.4"/><polygon points="168.7,102.1 167.4,97.4 172.3,98.5"/><polygon points="152.7,68.2 154.7,66.7 155.2,68.8"/><polygon points="142.0,13.0 142.8,15.1 140.5,14.9"/><polygon points="141.4,25.6 140.1,28.9 137.6,26.5"/><polygon points="139.1,45.0 137.1,48.8 134.5,45.8"/><polygon points="177.4,87.7 179.5,85.0 181.0,87.7"/><polygon points="155.4,91.3 149.7,89.1 154.1,85.9"/><polygon points="139.9,25.7 142.9,24.0 143.2,26.9"/><polygon points="164.7,29.1 166.2,27.3 167.2,29.1"/><polygon points="151.8,55.0 156.5,58.4 151.5,60.3"/><polygon points="165.3,63.8 160.0,64.6 161.5,60.4"/><polygon points="185.4,75.8 186.2,80.8 181.3,79.3"/><polygon points="153.4,40.7 156.1,41.4 154.3,43.0"/><polygon points="136.8,10.9 134.0,9.6 136.4,8.1"/><polygon points="152.7,9.1 150.5,8.2 152.2,7.0"/><polygon points="139.1,37.4 138.2,39.5 136.7,37.9"/><polygon points="166.2,18.8 166.9,15.9 169.3,17.6"/><polygon points="157.2,14.8 151.8,17.5 151.6,12.5"/><polygon points="160.6,50.8 157.8,50.5 159.2,48.6"/><polygon points="154.0,31.1 149.0,28.8 153.2,26.2"/><polygon points="135.3,97.0 131.1,95.5 134.2,93.2"/><polygon points="166.6,5.3 162.6,7.7 162.1,3.8"/></g>
</svg><div class="lbl" style="top:46.3px;left:6px;transform:scaleX(0.885)">MUSIC</div></div><div class="t t1" style="top:122.64px;transform:scaleX(0.978)">MuSiK-ViDEOS{2025}</div><div class="t t2" style="top:142.15px">Musikvideos</div><div class="t t2" style="top:162.15px;transform:scaleX(0.947)">D:\NA1-MuSiK-ViDEOS{202...</div></div>
<div class="card" style="left:933px;top:213px"><div class="img"><svg style="position:absolute;left:0;top:0;width:194px;height:109px" viewBox="0 0 194 109"><path fill="#e6e6e6" fill-rule="evenodd" d="M72.8 37Q72.8 34.5 75.3 34.5H118.4Q120.9 34.5 120.9 37V70.6Q120.9 73.1 118.4 73.1H75.3Q72.8 73.1 72.8 70.6ZM78 49.1H116.3V67.8H78ZM79.5 34.5H85.8L89.3 43.6H83Z M91 34.5H97.3L100.8 43.6H94.5Z M102.5 34.5H108.8L112.3 43.6H106Z"/></svg></div><div class="t t1" style="top:122.64px">XxX</div><div class="t t2" style="top:142.15px">Filme</div><div class="t t2" style="top:162.15px;transform:scaleX(0.975)">\\Ms1\18tb-ex3\XxX-FiLME1</div></div>
<div class="card" style="left:1148px;top:213px"><div class="img"><svg width="194" height="109" viewBox="0 0 194 109" style="position:absolute;left:0;top:0;display:block"><defs><linearGradient id="c5g" x1="0" y1="0" x2="1" y2="0"><stop offset="0" stop-color="#05461f"/><stop offset="0.34" stop-color="#05461f"/><stop offset="0.45" stop-color="#0e4028"/><stop offset="0.56" stop-color="#0c3020"/><stop offset="0.62" stop-color="#051a0e"/><stop offset="0.72" stop-color="#030805"/><stop offset="1" stop-color="#030503"/></linearGradient>
<linearGradient id="c5rail" x1="0" y1="0" x2="1" y2="0"><stop offset="0" stop-color="#4a8070" stop-opacity="0.5"/><stop offset="0.45" stop-color="#6a9aa0" stop-opacity="0.6"/><stop offset="0.55" stop-color="#c8d0f0"/><stop offset="1" stop-color="#e0e4ff"/></linearGradient>
<linearGradient id="c5gold" x1="0" y1="0" x2="1" y2="0"><stop offset="0" stop-color="#c8a850"/><stop offset="0.5" stop-color="#a88430"/><stop offset="1" stop-color="#6a5020"/></linearGradient><filter id="b1" x="-20%" y="-20%" width="140%" height="140%"><feGaussianBlur stdDeviation="1.2"/></filter><filter id="b2" x="-50%" y="-50%" width="200%" height="200%"><feGaussianBlur stdDeviation="3"/></filter><filter id="b4" x="-50%" y="-50%" width="200%" height="200%"><feGaussianBlur stdDeviation="6"/></filter></defs><rect width="194" height="109" fill="url(#c5g)"/>
<g filter="url(#b2)" opacity="0.8">
<ellipse cx="99" cy="32" rx="5" ry="6" fill="#6a9a88" opacity="0.5"/>
<ellipse cx="85" cy="34" rx="7" ry="5" fill="#4a7a68" opacity="0.4"/>
<rect x="78" y="60" width="36" height="40" fill="#2a5a40" opacity="0.4"/>
<ellipse cx="165" cy="41" rx="14" ry="9" fill="#1a201a"/>
<ellipse cx="170" cy="58" rx="6" ry="5" fill="#2a302a"/>
<ellipse cx="183" cy="60" rx="5" ry="5" fill="#252a25"/>
</g>
<g filter="url(#b1)">
<rect x="80" y="63" width="32" height="2" fill="#5a8a70" opacity="0.5"/>
<rect x="80" y="72" width="32" height="2" fill="#5a8a70" opacity="0.5"/>
<rect x="80" y="81" width="32" height="2" fill="#5a8a70" opacity="0.5"/>
<rect x="82" y="92" width="30" height="5" fill="#6a9a80" opacity="0.5"/>
<polygon points="95,16 194,4 194,8 95,20" fill="url(#c5rail)"/>
<rect x="102" y="0" width="1" height="109" fill="#3a6a50" opacity="0.4"/>
<rect x="124" y="0" width="1" height="109" fill="#2a4a3a" opacity="0.4"/>
</g>
<g filter="url(#b1)">
<ellipse cx="135" cy="36.5" rx="4.3" ry="5" fill="#c0a048"/>
<rect x="133" y="41" width="4" height="5" fill="#8a6a28"/>
<polygon points="126,46 146,46 150,58 147,75 126,75 123,58" fill="url(#c5gold)"/>
<polygon points="122,50 126,49 126,72 121,72" fill="#c8a850"/>
<polygon points="146,50 151,52 157,66 150,69 146,62" fill="#b89040"/>
<polygon points="128,75 135,75 134,109 129,109" fill="#9a7a2e"/>
<polygon points="137,75 144,75 145,109 139,109" fill="#8a6c28"/>
<ellipse cx="181" cy="79" rx="13" ry="8" fill="#d0d4e4"/>
<rect x="168" y="79" width="26" height="30" fill="#d8d0b8"/>
<rect x="164" y="84" width="5" height="22" fill="#c8c0a8"/>
<rect x="172" y="86" width="20" height="2" fill="#3a58a8"/>
<rect x="172" y="90" width="20" height="2" fill="#3a58a8"/>
<rect x="174" y="75" width="10" height="4" fill="#4a68b8"/>
<rect x="176" y="96" width="6" height="10" fill="#6a6a70"/>
</g>
</svg><div class="lbl" style="top:46.3px;left:6px;transform:scaleX(0.93)">COLLECTIONS</div></div><div class="t t1" style="top:122.64px;transform:scaleX(0.98)">Sammlungen</div><div class="t t2" style="top:142.15px;transform:scaleX(0.958)">Sammlungen</div></div>
<div class="card" style="left:288px;top:426px"><div class="img"><svg width="194" height="109" viewBox="0 0 194 109" style="position:absolute;left:0;top:0;display:block"><defs><linearGradient id="c6g" x1="0" y1="0" x2="1" y2="0"><stop offset="0" stop-color="#05461f"/><stop offset="0.38" stop-color="#05461f"/><stop offset="0.55" stop-color="#113c20"/><stop offset="0.72" stop-color="#1a2a1e"/><stop offset="0.85" stop-color="#1c1e1c"/><stop offset="1" stop-color="#1a1a1a"/></linearGradient>
<radialGradient id="c6t" cx="135" cy="5" r="60" gradientUnits="userSpaceOnUse" gradientTransform="translate(135 5) scale(1 0.6) translate(-135 -5)"><stop offset="0" stop-color="#3a4a3c" stop-opacity="0.55"/><stop offset="1" stop-color="#3a4a3c" stop-opacity="0"/></radialGradient><filter id="b1" x="-20%" y="-20%" width="140%" height="140%"><feGaussianBlur stdDeviation="1.2"/></filter><filter id="b2" x="-50%" y="-50%" width="200%" height="200%"><feGaussianBlur stdDeviation="3"/></filter><filter id="b4" x="-50%" y="-50%" width="200%" height="200%"><feGaussianBlur stdDeviation="6"/></filter></defs><rect width="194" height="109" fill="url(#c6g)"/>
<rect width="194" height="109" fill="url(#c6t)"/>
<g filter="url(#b1)">
<rect x="101" y="1.5" width="24" height="3.5" rx="1.5" fill="#8aa88e" opacity="0.75"/>
<rect x="103.5" y="9" width="9" height="19" fill="#8a9c80" opacity="0.75"/>
<rect x="116" y="19" width="48" height="4" fill="#8a8a8a" opacity="0.55"/>
<rect x="94.5" y="31.5" width="14" height="3.3" rx="1.5" fill="#2a9a4a" opacity="0.9"/>
<rect x="114" y="35" width="27" height="46" fill="#283a2a" opacity="0.6"/>
<rect x="141" y="66" width="27" height="43" fill="#2a2a2a" opacity="0.9"/>
<rect x="117" y="38" width="18" height="1.3" fill="#5a6a5a" opacity="0.4"/>
<rect x="117" y="43" width="18" height="1.3" fill="#5a6a5a" opacity="0.4"/>
<rect x="117" y="48" width="14" height="1.3" fill="#5a6a5a" opacity="0.4"/>
<rect x="117" y="53" width="14" height="1.3" fill="#5a6a5a" opacity="0.4"/>
<rect x="117" y="58" width="14" height="1.3" fill="#5a6a5a" opacity="0.4"/>
<rect x="117" y="63" width="18" height="1.3" fill="#5a6a5a" opacity="0.4"/>
<rect x="144" y="51" width="8" height="1.3" fill="#5a5a5a" opacity="0.4"/>
<rect x="144" y="56" width="8" height="1.3" fill="#5a5a5a" opacity="0.4"/>
<rect x="168" y="51" width="10" height="1.3" fill="#5a5a5a" opacity="0.4"/>
<rect x="168" y="56" width="10" height="1.3" fill="#5a5a5a" opacity="0.4"/>
<rect x="168" y="62" width="10" height="1.3" fill="#5a5a5a" opacity="0.4"/>
<rect x="168" y="68" width="10" height="1.3" fill="#5a5a5a" opacity="0.4"/>
<circle cx="183" cy="41" r="1.5" fill="#aaa" opacity="0.5"/>
<rect x="141" y="68" width="2" height="22" fill="#4a7aa0" opacity="0.4"/>
<rect x="191" y="0" width="3" height="12" fill="#050505"/>
</g>
</svg><div class="lbl" style="top:46.6px;left:6px;transform:scaleX(0.98)">PLAYLISTS</div></div><div class="t t1" style="top:122.64px;transform:scaleX(0.94)">WiEDeRGaBeLiSTeN</div><div class="t t2" style="top:142.15px">Wiedergabelisten</div><div class="t t2" style="top:162.15px">2 Verzeichnisse</div></div>
  <div style="position:absolute;left:1400px;top:7px;width:0;height:0;border-left:3.6px solid transparent;border-right:3.6px solid transparent;border-bottom:4px solid #8a8a8a"></div>
  <div style="position:absolute;left:1400px;top:1418px;width:0;height:0;border-left:3.6px solid transparent;border-right:3.6px solid transparent;border-top:4px solid #8a8a8a"></div>
</div>
</body></html>
